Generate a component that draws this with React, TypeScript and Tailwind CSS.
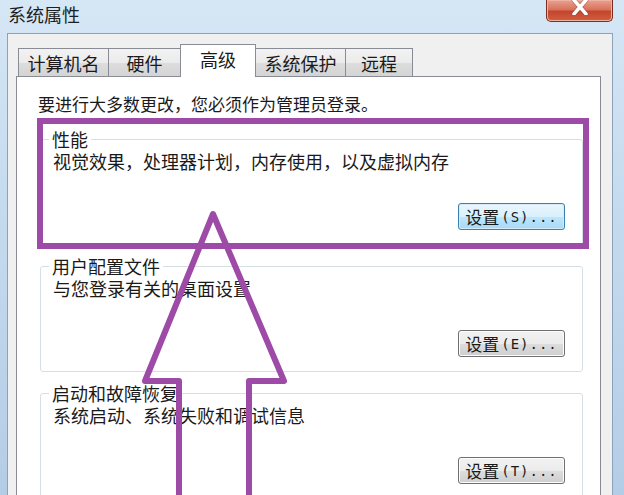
import React from "react"

const font = "font-['Noto_Sans_CJK_SC','Noto_Sans',sans-serif]"

const tabs = [
  { label: "计算机名", w: "w-[91px]" },
  { label: "硬件", w: "w-[73px]" },
  { label: "高级", w: "w-[76px]", active: true },
  { label: "系统保护", w: "w-[91px]" },
  { label: "远程", w: "w-[68px]" },
]

const SettingsButton: React.FC<{ hotkey: string; focused?: boolean }> = ({ hotkey, focused }) => (
  <div
    className={
      "flex h-[27px] w-[107px] items-center justify-center rounded-[3px] border text-[17px] leading-none text-[#1a1a1a] " +
      (focused
        ? "border-[#3c7fb1] bg-[linear-gradient(180deg,#eaf6fd_0%,#d9f0fc_50%,#bee6fd_51%,#a7d9f5_100%)] shadow-[inset_0_0_0_1px_#d4ecfa]"
        : "border-[#707070] bg-[linear-gradient(180deg,#f2f2f2_0%,#ebebeb_50%,#dddddd_51%,#cfcfcf_100%)] shadow-[inset_0_0_0_1px_#fcfcfc]")
    }
  >
    <span>设置</span>
    <span className="ml-[2px] font-['DejaVu_Sans_Mono',monospace] text-[14px] tracking-[1px]">({hotkey})...</span>
  </div>
)

const GroupBox: React.FC<{ title: string; text: string; hotkey: string; focused?: boolean; first?: boolean }> = ({
  title,
  text,
  hotkey,
  focused,
  first,
}) => (
  <fieldset
    className={
      "ml-[2px] mr-[17px] rounded-[3px] border border-[#d5dfe5] pb-[14px] pl-[8px] pr-[17px] " +
      (first ? "mt-[14px]" : "mt-[10px]")
    }
  >
    <legend className="px-[3px] text-[18px] leading-[22px]">{title}</legend>
    <div className="pl-[4px] text-[18px] leading-[22px]">{text}</div>
    <div className="mt-[31px] flex justify-end">
      <SettingsButton hotkey={hotkey} focused={focused} />
    </div>
  </fieldset>
)

export default function App() {
  return (
    <div
      className={
        "relative flex h-[495px] w-[624px] flex-col overflow-hidden bg-[linear-gradient(180deg,#d6e7f5_0%,#c5dbef_40%,#b4cde6_100%)] text-[#1a1a1a] " +
        font
      }
    >
      {/* title bar */}
      <div className="flex h-[33px] shrink-0 items-start justify-between pl-[8px] pr-[11px]">
        <span className="mt-[3px] text-[18px] leading-[22px] text-[#1e1e1e]">系统属性</span>
        <div className="flex h-[22px] w-[67px] items-center justify-center rounded-b-[5px] border border-t-0 border-[#7a2d22] bg-[linear-gradient(180deg,#eaa28f_0%,#d8735c_45%,#c4452e_55%,#d0603f_100%)] shadow-[inset_0_0_0_1px_#efb3a4]">
          <svg width="18" height="16" viewBox="0 0 18 16" className="-mt-[8px]">
            <path d="M3 1 L15 15 M15 1 L3 15" stroke="#5b2018" strokeWidth="5" strokeLinecap="round" opacity="0.3" />
            <path d="M3 1 L15 15 M15 1 L3 15" stroke="#ffffff" strokeWidth="3.5" strokeLinecap="round" />
          </svg>
        </div>
      </div>

      {/* client area */}
      <div className="ml-[7px] mr-[11px] flex flex-1 flex-col border-l border-t border-r border-[#8da2b8] bg-[#f0f0f0] pl-[8px] pr-[11px]">
        <div className="flex h-[42px] shrink-0 items-end pl-[2px]">
          {tabs.map((t, i) => (
            <div
              key={t.label}
              className={
                t.w +
                " flex items-center justify-center border border-b-0 border-[#898c95] text-[18px] leading-none " +
                (i > 0 ? "-ml-px " : "") +
                (t.active
                  ? "relative z-10 -mb-px h-[33px] bg-white pb-[4px]"
                  : "h-[28px] bg-[linear-gradient(180deg,#f2f2f2_0%,#ebebeb_50%,#dddddd_51%,#d4d4d4_100%)]")
              }
            >
              {t.label}
            </div>
          ))}
        </div>

        <div className="flex-1 border border-[#898c95] bg-white pl-[21px] pt-[17px]">
          <div className="text-[17px] leading-[20px]">要进行大多数更改，您必须作为管理员登录。</div>
          <GroupBox first title="性能" text="视觉效果，处理器计划，内存使用，以及虚拟内存" hotkey="S" focused />
          <GroupBox title="用户配置文件" text="与您登录有关的桌面设置" hotkey="E" />
          <GroupBox title="启动和故障恢复" text="系统启动、系统失败和调试信息" hotkey="T" />
        </div>
      </div>

      {/* annotation marks drawn over the dialog */}
      <svg className="pointer-events-none absolute inset-0" width="624" height="495" viewBox="0 0 624 495">
        <rect x="40" y="121" width="546" height="125" fill="none" stroke="#9d4ba6" strokeWidth="6" />
        <polyline
          points="179,500 179,381 145,381 213,214 284,381 249,381 249,500"
          fill="none"
          stroke="#9d4ba6"
          strokeWidth="6"
          strokeLinejoin="round"
        />
      </svg>
    </div>
  )
}
